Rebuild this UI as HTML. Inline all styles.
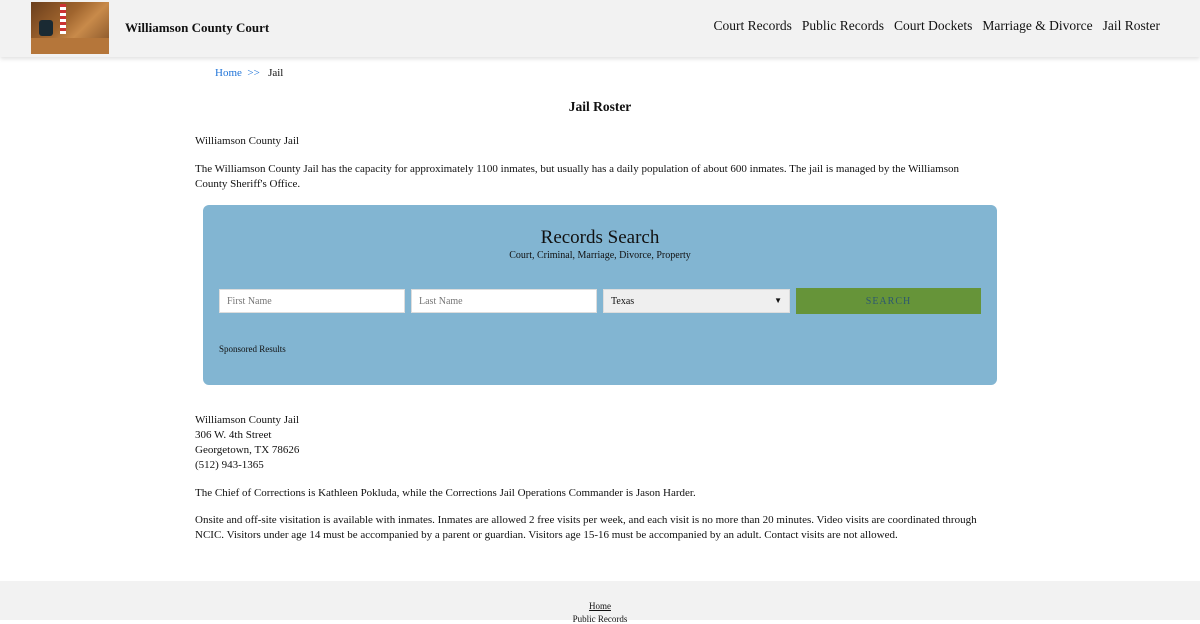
<!DOCTYPE html>
<html><head><style>
body{margin:0;font-family:"Liberation Serif",serif;color:#111;background:#fff;width:1200px;height:620px;overflow:hidden;position:relative}
.hdr{position:absolute;left:0;top:0;width:1200px;height:57px;background:#f2f2f2;box-shadow:0 2px 4px rgba(0,0,0,.12)}
.logo{position:absolute;left:31px;top:2px;width:78px;height:52px;background:linear-gradient(135deg,#6b3e1c,#a0652e 40%,#c88a4a 60%,#7a4a22)}
.logo .c{position:absolute;left:8px;top:18px;width:14px;height:16px;background:#1a2a33;border-radius:3px}
.logo .f{position:absolute;left:29px;top:2px;width:6px;height:30px;background:repeating-linear-gradient(#c33 0 3px,#fff 3px 6px)}
.logo .d{position:absolute;left:0;top:36px;width:78px;height:16px;background:#b5763a}
.title{position:absolute;left:125px;top:20px;font-size:13px;font-weight:bold}
.nav{position:absolute;right:40px;top:18px;font-size:13.5px}
.nav span{margin-left:10px}
.bc{position:absolute;left:215px;top:67px;font-size:11px}
.bc a{color:#1e73d8;text-decoration:none}
h1{position:absolute;left:0;width:1200px;top:99px;margin:0;text-align:center;font-size:13.5px;font-weight:bold}
.p{position:absolute;left:195px;width:800px;font-size:11px;line-height:15px}
.box{position:absolute;left:203px;top:205px;width:794px;height:180px;background:#82b5d2;border-radius:6px}
.box .h{position:absolute;top:22px;width:100%;text-align:center;font-size:19px}
.box .s{position:absolute;top:45px;width:100%;text-align:center;font-size:10px}
.in{position:absolute;top:84px;height:24px;background:#fff;border:1px solid #ddd;box-sizing:border-box;font-size:10px;color:#777;padding:6px 7px}
.btn{position:absolute;left:593px;top:83px;width:185px;height:26px;background:#669439;color:#2d5870;font-size:10px;text-align:center;line-height:28px;letter-spacing:1px}
.sp{position:absolute;left:16px;top:139px;font-size:9px}
.ft{position:absolute;left:0;top:581px;width:1200px;height:39px;background:#f2f2f2;text-align:center;font-size:9px}
</style></head><body>
<div class="hdr"><div class="logo"><div class="d"></div><div class="c"></div><div class="f"></div></div>
<div class="title">Williamson County Court</div>
<div class="nav"><span>Court Records</span><span>Public Records</span><span>Court Dockets</span><span>Marriage &amp; Divorce</span><span>Jail Roster</span></div></div>
<div class="bc"><a>Home</a> &nbsp;<a>&gt;&gt;</a>&nbsp;&nbsp; Jail</div>
<h1>Jail Roster</h1>
<div class="p" style="top:134px">Williamson County Jail</div>
<div class="p" style="top:162px">The Williamson County Jail has the capacity for approximately 1100 inmates, but usually has a daily population of about 600 inmates. The jail is managed by the Williamson<br>County Sheriff's Office.</div>
<div class="box"><div class="h">Records Search</div><div class="s">Court, Criminal, Marriage, Divorce, Property</div>
<div class="in" style="left:16px;width:186px">First Name</div>
<div class="in" style="left:208px;width:186px">Last Name</div>
<div class="in" style="left:400px;width:187px;background:#efefef;color:#111">Texas<span style="float:right;font-size:8px">&#9660;</span></div>
<div class="btn">SEARCH</div>
<div class="sp">Sponsored Results</div></div>
<div class="p" style="top:413px">Williamson County Jail<br>306 W. 4th Street<br>Georgetown, TX 78626<br>(512) 943-1365</div>
<div class="p" style="top:486px">The Chief of Corrections is Kathleen Pokluda, while the Corrections Jail Operations Commander is Jason Harder.</div>
<div class="p" style="top:513px">Onsite and off-site visitation is available with inmates. Inmates are allowed 2 free visits per week, and each visit is no more than 20 minutes. Video visits are coordinated through<br>NCIC. Visitors under age 14 must be accompanied by a parent or guardian. Visitors age 15-16 must be accompanied by an adult. Contact visits are not allowed.</div>
<div class="ft"><div style="margin-top:20px;text-decoration:underline">Home</div><div style="margin-top:3px">Public Records</div></div>
</body></html>
